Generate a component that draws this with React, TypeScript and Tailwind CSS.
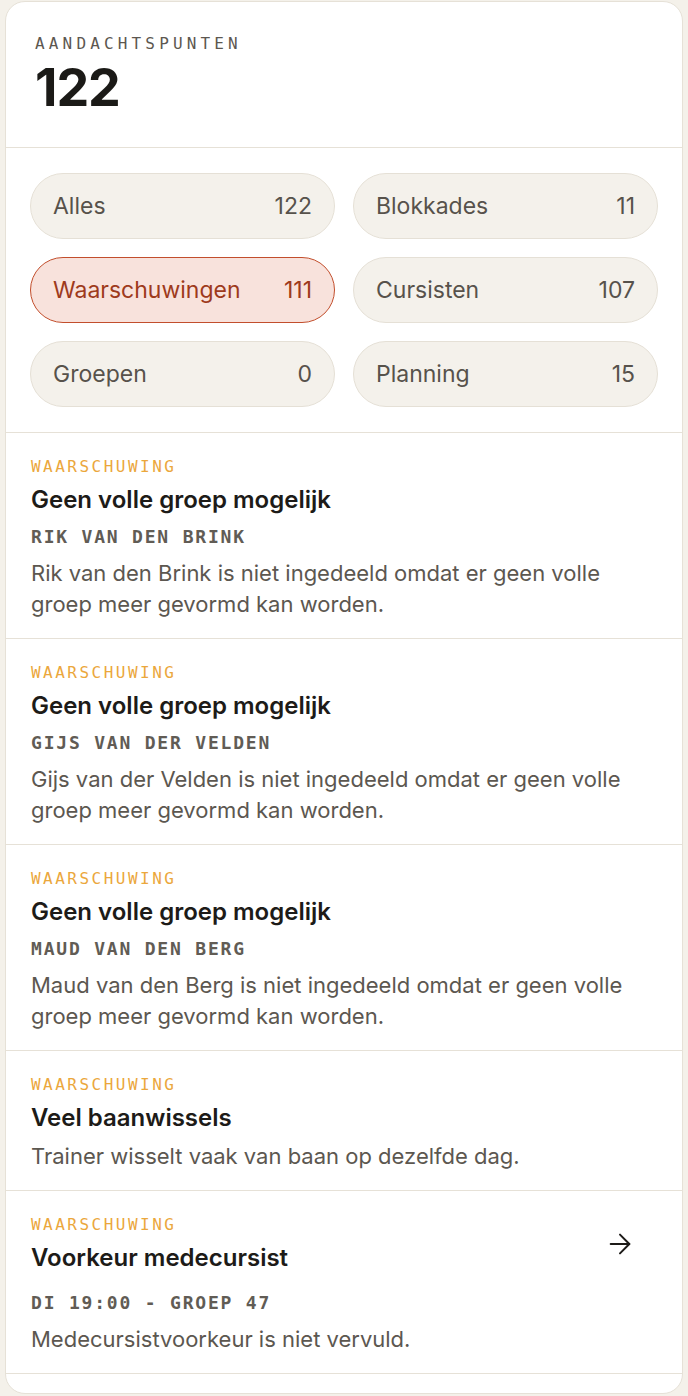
import React from 'react';
import { ArrowRight } from 'lucide-react';

const FILTERS = [
  { id: 'all', label: 'Alles', count: 122 },
  { id: 'blocks', label: 'Blokkades', count: 11 },
  { id: 'warnings', label: 'Waarschuwingen', count: 111 },
  { id: 'students', label: 'Cursisten', count: 107 },
  { id: 'groups', label: 'Groepen', count: 0 },
  { id: 'planning', label: 'Planning', count: 15 },
];

const ITEMS = [
  {
    title: 'Geen volle groep mogelijk',
    meta: 'RIK VAN DEN BRINK',
    body: 'Rik van den Brink is niet ingedeeld omdat er geen volle groep meer gevormd kan worden.',
  },
  {
    title: 'Geen volle groep mogelijk',
    meta: 'GIJS VAN DER VELDEN',
    body: 'Gijs van der Velden is niet ingedeeld omdat er geen volle groep meer gevormd kan worden.',
  },
  {
    title: 'Geen volle groep mogelijk',
    meta: 'MAUD VAN DEN BERG',
    body: 'Maud van den Berg is niet ingedeeld omdat er geen volle groep meer gevormd kan worden.',
  },
  {
    title: 'Veel baanwissels',
    body: 'Trainer wisselt vaak van baan op dezelfde dag.',
  },
  {
    title: 'Voorkeur medecursist',
    meta: 'DI 19:00 - GROEP 47',
    body: 'Medecursistvoorkeur is niet vervuld.',
    link: true,
  },
];

const mono = "font-['DejaVu_Sans_Mono','Liberation_Mono',monospace]";

export default function App() {
  const active = 'warnings';

  return (
    <div className="min-h-screen bg-[#f4f1ea] px-[5px] pt-[1px] pb-[3px] font-['Inter','Noto_Sans',sans-serif]">
      <div className="bg-white border-[1.5px] border-[#e6e1d7] rounded-[20px] overflow-hidden">
        {/* header */}
        <div className="px-[29px] pt-[32px] pb-[31px] border-b-[1.5px] border-[#e6e1d7]">
          <div className={`${mono} text-[16px] leading-[20px] tracking-[0.26em] text-[#5c5750]`}>AANDACHTSPUNTEN</div>
          <div className="mt-[6px] text-[52px] leading-[56px] font-bold tracking-[-0.02em] text-[#1b1a17]">122</div>
        </div>

        {/* filters */}
        <div className="grid grid-cols-2 gap-[18px] px-[24px] pt-[25px] pb-[25px] border-b-[1.5px] border-[#e6e1d7]">
          {FILTERS.map((f) => (
            <button
              key={f.id}
              type="button"
              className={`h-[66px] rounded-full border-[1.5px] flex items-center justify-between px-[22px] text-[23px] ${
                f.id === active
                  ? 'bg-[#f8e2dc] border-[#c24e2c] text-[#9e3a1c]'
                  : 'bg-[#f4f1eb] border-[#e5e0d6] text-[#57524b]'
              }`}
            >
              <span>{f.label}</span>
              <span>{f.count}</span>
            </button>
          ))}
        </div>

        {/* items */}
        {ITEMS.map((item, i) => (
          <div key={i} className="px-[25px] pt-[24px] pb-[18px] border-b-[1.5px] border-[#e6e1d7]">
            <div className={`flex items-center justify-between ${item.link ? 'mb-[17px]' : ''}`}>
              <div>
                <div className={`${mono} text-[16px] leading-[20px] tracking-[0.155em] text-[#eba73c]`}>WAARSCHUWING</div>
                <div className="mt-[8px] text-[24px] leading-[30px] font-semibold text-[#1d1b18]">{item.title}</div>
              </div>
              {item.link && <ArrowRight className="w-[32px] h-[32px] text-[#1d1b18] mr-[21px]" strokeWidth={1.5} />}
            </div>
            {item.meta && (
              <div className={`${mono} mt-[9px] text-[18px] leading-[25px] font-bold tracking-[0.1em] text-[#615c55]`}>{item.meta}</div>
            )}
            <div className={`${item.meta ? 'mt-[9px]' : 'mt-[8px]'} text-[22px] leading-[31px] text-[#5c5750]`}>{item.body}</div>
          </div>
        ))}
        <div className="h-[19px]" />
      </div>
    </div>
  );
}
